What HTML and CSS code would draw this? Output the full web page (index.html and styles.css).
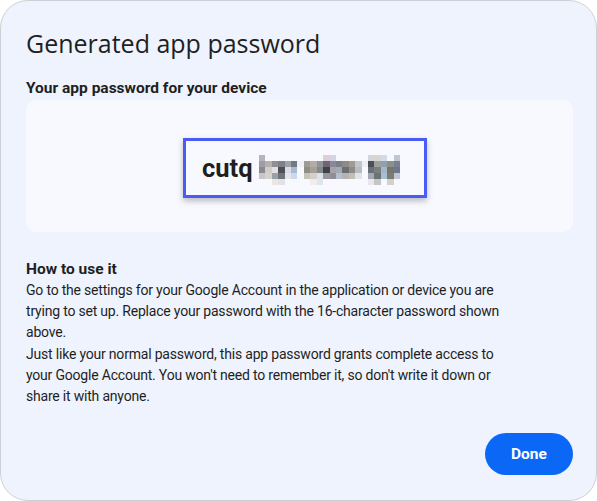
FILE: index.html
```html
<!DOCTYPE html>
<html lang="en">
<head>
<meta charset="utf-8">
<link rel="stylesheet" href="styles.css">
</head>
<body>
<div class="dialog">
  <h1 class="title">Generated app password</h1>
  <div class="label">Your app password for your device</div>
  <div class="pw-panel">
    <div class="pw-box">
      <span class="pw-text">cutq</span>
      <svg class="mosaic" width="141" height="30" viewBox="0 0 132 30" preserveAspectRatio="none" shape-rendering="crispEdges">
        <rect x="0" y="0" width="6" height="6" fill="#b7b4bf"/><rect x="0" y="6" width="6" height="6" fill="#a09ca5"/><rect x="0" y="12" width="6" height="6" fill="#8c898f"/><rect x="0" y="18" width="6" height="6" fill="#c8c4c9"/>
        <rect x="6" y="6" width="6" height="6" fill="#b3b0ae"/><rect x="6" y="12" width="6" height="6" fill="#d2ccc8"/><rect x="6" y="18" width="6" height="6" fill="#d5d1cf"/>
        <rect x="12" y="6" width="6" height="6" fill="#8f8f95"/><rect x="12" y="12" width="6" height="6" fill="#e4e0e2"/><rect x="12" y="18" width="6" height="6" fill="#9aa0a8"/><rect x="12" y="24" width="6" height="6" fill="#ebe6e4"/>
        <rect x="18" y="6" width="6" height="6" fill="#7f8187"/><rect x="18" y="12" width="6" height="6" fill="#4c4f57"/><rect x="18" y="18" width="6" height="6" fill="#6f737b"/><rect x="18" y="24" width="6" height="6" fill="#e2e2e6"/>
        <rect x="24" y="6" width="6" height="6" fill="#9ea3aa"/><rect x="24" y="12" width="6" height="6" fill="#d9dde3"/><rect x="24" y="18" width="6" height="6" fill="#e2e6ec"/>
        <rect x="30" y="6" width="6" height="6" fill="#74787f"/><rect x="30" y="12" width="6" height="6" fill="#a6bbd6"/><rect x="30" y="18" width="6" height="6" fill="#cbd9ea"/>
        <rect x="36" y="6" width="6" height="6" fill="#eef2f8"/>
        <rect x="42" y="6" width="6" height="6" fill="#9c9c95"/><rect x="42" y="12" width="6" height="6" fill="#8f8d88"/><rect x="42" y="18" width="6" height="6" fill="#c9c2bb"/>
        <rect x="48" y="6" width="6" height="6" fill="#b2aca4"/><rect x="48" y="12" width="6" height="6" fill="#a5a097"/><rect x="48" y="18" width="6" height="6" fill="#d5cfca"/><rect x="48" y="24" width="6" height="6" fill="#f0eceb"/>
        <rect x="54" y="6" width="6" height="6" fill="#8d959b"/><rect x="54" y="12" width="6" height="6" fill="#828a90"/><rect x="54" y="18" width="6" height="6" fill="#dde3ea"/><rect x="54" y="24" width="6" height="6" fill="#dfe5ed"/>
        <rect x="60" y="0" width="6" height="6" fill="#dccfd8"/><rect x="60" y="6" width="6" height="6" fill="#6e6671"/><rect x="60" y="12" width="6" height="6" fill="#3f4048"/><rect x="60" y="18" width="6" height="6" fill="#9a969c"/>
        <rect x="66" y="0" width="6" height="6" fill="#d4d4e4"/><rect x="66" y="6" width="6" height="6" fill="#8b8999"/><rect x="66" y="12" width="6" height="6" fill="#a7a2ad"/><rect x="66" y="18" width="6" height="6" fill="#8f8e95"/>
        <rect x="72" y="6" width="6" height="6" fill="#7c8089"/><rect x="72" y="12" width="6" height="6" fill="#a5a9b0"/><rect x="72" y="18" width="6" height="6" fill="#b6bfd0"/>
        <rect x="78" y="6" width="6" height="6" fill="#8e8a86"/><rect x="78" y="12" width="6" height="6" fill="#6d6e72"/><rect x="78" y="18" width="6" height="6" fill="#b6b4b3"/>
        <rect x="84" y="6" width="6" height="6" fill="#a29b94"/><rect x="84" y="12" width="6" height="6" fill="#8e8b88"/><rect x="84" y="18" width="6" height="6" fill="#c4bdb6"/>
        <rect x="90" y="6" width="6" height="6" fill="#c1c5cc"/><rect x="90" y="12" width="6" height="6" fill="#b7bcc4"/><rect x="90" y="18" width="6" height="6" fill="#dfe3ea"/>
        <rect x="96" y="6" width="6" height="6" fill="#eceff5"/>
        <rect x="102" y="0" width="6" height="6" fill="#d3d6de"/><rect x="102" y="6" width="6" height="6" fill="#4c4f57"/><rect x="102" y="12" width="6" height="6" fill="#6b7078"/><rect x="102" y="18" width="6" height="6" fill="#a4a8b0"/><rect x="102" y="24" width="6" height="6" fill="#e6e8ed"/>
        <rect x="108" y="0" width="6" height="6" fill="#d9d4cf"/><rect x="108" y="6" width="6" height="6" fill="#9ba1a1"/><rect x="108" y="12" width="6" height="6" fill="#7a7e7e"/><rect x="108" y="18" width="6" height="6" fill="#6c7374"/><rect x="108" y="24" width="6" height="6" fill="#c3c5c6"/>
        <rect x="114" y="0" width="6" height="6" fill="#d2dbe8"/><rect x="114" y="6" width="6" height="6" fill="#8fa0af"/><rect x="114" y="12" width="6" height="6" fill="#a7b7c5"/><rect x="114" y="18" width="6" height="6" fill="#a5bfd4"/>
        <rect x="120" y="6" width="6" height="6" fill="#8d8f8b"/><rect x="120" y="12" width="6" height="6" fill="#76766f"/><rect x="120" y="18" width="6" height="6" fill="#7f7b70"/><rect x="120" y="24" width="6" height="6" fill="#d2d1cf"/>
        <rect x="126" y="0" width="6" height="6" fill="#c4c6cf"/><rect x="126" y="6" width="6" height="6" fill="#7a8091"/><rect x="126" y="12" width="6" height="6" fill="#6f778a"/><rect x="126" y="18" width="6" height="6" fill="#c2c6d2"/>
      </svg>
    </div>
  </div>
  <div class="howto">
    <div class="howto-title">How to use it</div>
    <p class="howto-text">Go to the settings for your Google Account in the application or device you are trying to set up. Replace your password with the 16-character password shown above.</p>
    <p class="howto-text">Just like your normal password, this app password grants complete access to your Google Account. You won't need to remember it, so don't write it down or share it with anyone.</p>
  </div>
  <div class="actions">
    <button class="done-btn">Done</button>
  </div>
</div>
</body>
</html>
```

FILE: styles.css
```css
html, body {
  margin: 0;
  padding: 0;
  background: #ffffff;
}

body {
  width: 597px;
  height: 501px;
  overflow: hidden;
  font-family: Roboto, "Liberation Sans", sans-serif;
  color: #1f1f1f;
}

.dialog {
  box-sizing: border-box;
  width: 597px;
  height: 501px;
  background: #eef3fd;
  border: 1px solid #cdd0d6;
  border-radius: 28px;
  padding: 0 23px 0 25px;
  display: flex;
  flex-direction: column;
}

.title {
  margin: 26px 0 0;
  font-family: "Open Sans", sans-serif;
  font-weight: 400;
  font-size: 25px;
  line-height: 32px;
  color: #1f1f1f;
}

.label {
  margin-top: 18px;
  font-size: 15.5px;
  font-weight: 700;
  line-height: 22px;
  color: #1f1f1f;
}

.pw-panel {
  margin-top: 1px;
  height: 132px;
  background: #f7f9fe;
  border-radius: 10px;
  display: flex;
  align-items: center;
  justify-content: center;
}

.pw-box {
  box-sizing: border-box;
  width: 244px;
  height: 60px;
  margin-left: 11px;
  margin-top: 4px;
  border: 3px solid #4b5cf5;
  box-shadow: 0 3px 6px rgba(0, 0, 0, 0.25);
  display: flex;
  align-items: center;
  padding-left: 16px;
  gap: 6px;
  background: #f7f9fe;
}

.pw-text {
  font-family: Roboto, sans-serif;
  font-weight: 700;
  font-size: 25.5px;
  color: #1f1f1f;
}

.mosaic {
  display: block;
  margin-top: 4px;
}

.howto {
  margin-top: 27px;
  max-width: 478px;
}

.howto-title {
  font-size: 15.5px;
  font-weight: 700;
  line-height: 21px;
}

.howto-text {
  margin: 0;
  font-size: 14px;
  line-height: 21.2px;
  letter-spacing: -0.2px;
  color: #1f1f1f;
}

.actions {
  margin-top: auto;
  margin-bottom: 25px;
  display: flex;
  justify-content: flex-end;
}

.done-btn {
  width: 88px;
  height: 42px;
  border: none;
  border-radius: 21px;
  background: #0b68f7;
  color: #ffffff;
  font-family: Roboto, sans-serif;
  font-weight: 700;
  font-size: 15.5px;
  cursor: pointer;
}
```
